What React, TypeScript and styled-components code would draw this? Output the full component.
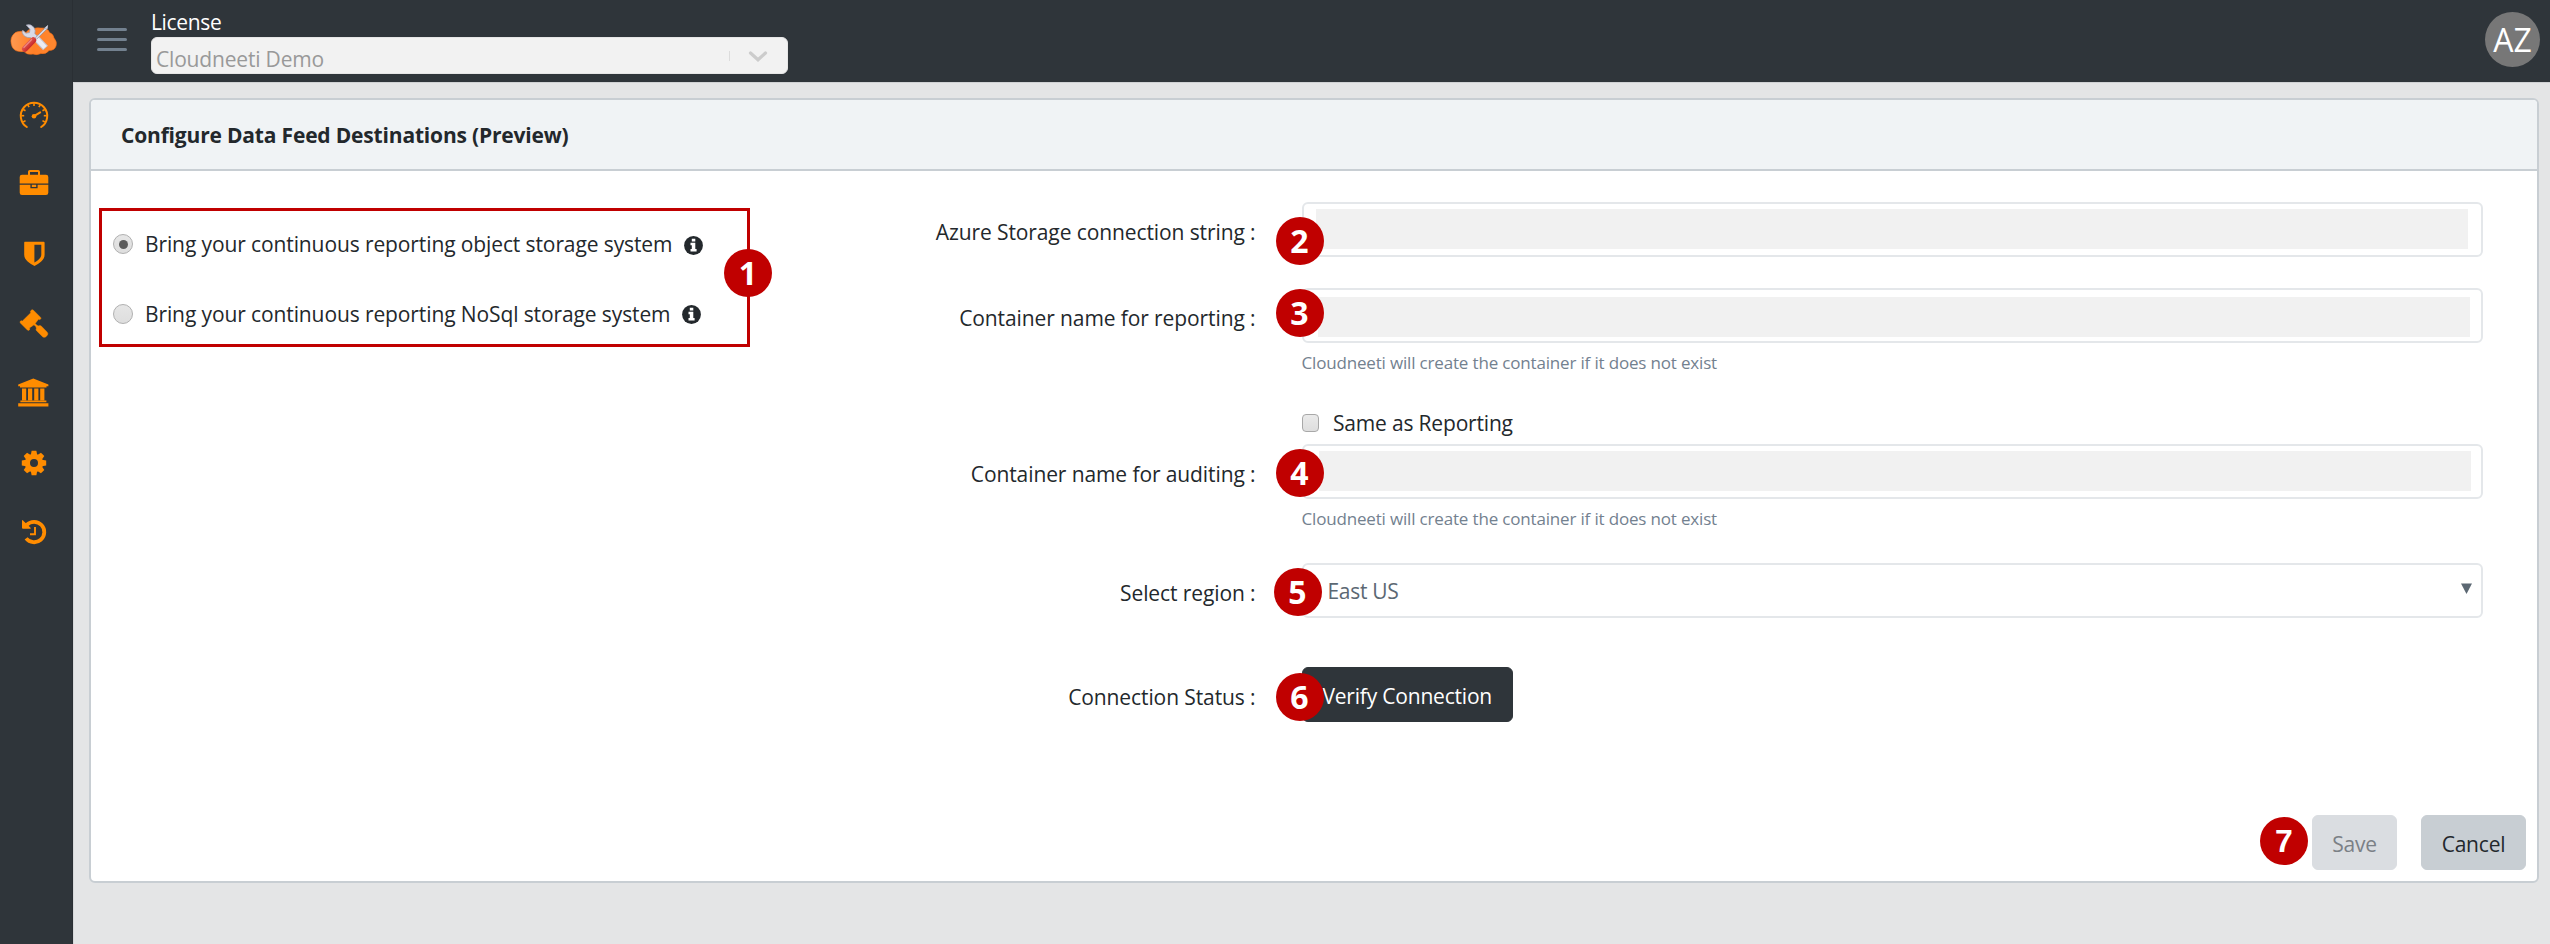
import React from "react";
import styled, { createGlobalStyle, css } from "styled-components";

const GlobalStyle = createGlobalStyle`
  *, *::before, *::after { box-sizing: border-box; }
  body {
    margin: 0;
    background: #e4e5e6;
    color: #23282c;
    font-family: "Open Sans", "Noto Sans", sans-serif;
    font-size: 21px;
    line-height: 30px;
    letter-spacing: -0.18px;
  }
`;

const Shell = styled.div`
  display: grid;
  grid-template-columns: 73px 1fr;
  grid-template-rows: 82px 1fr;
  width: 2550px;
  height: 944px;
  overflow: hidden;
`;

const Sidebar = styled.aside`
  grid-row: 1 / 3;
  background: #2f353a;
  border-right: 1px solid #2a2f34;
`;

const Brand = styled.div`
  height: 80px;
  padding: 20px 0 0 9px;
  svg { display: block; }
`;

const NavItem = styled.a`
  display: flex;
  align-items: center;
  height: 69.6px;
  padding-left: 16px;
`;

const Header = styled.header`
  display: flex;
  align-items: flex-start;
  background: #2f353a;
  padding: 0 10px 0 24px;
`;

const MenuToggle = styled.button`
  display: flex;
  flex-direction: column;
  gap: 7px;
  width: 30px;
  margin: 28px 24px 0 0;
  padding: 0;
  border: 0;
  background: none;
  span {
    height: 3px;
    border-radius: 2px;
    background: #73818f;
  }
`;

const License = styled.div`
  flex: 1;
  padding-top: 7px;
`;

const LicenseLabel = styled.div`
  color: #fff;
  letter-spacing: -0.35px;
`;

const LicenseSelect = styled.div`
  display: flex;
  align-items: center;
  width: 637px;
  height: 37px;
  padding: 4px 19px 0 4px;
  border: 1px solid #e6e6e6;
  border-radius: 6px;
  background: #f2f2f2;
  color: #999;
`;

const SelectValue = styled.span`
  flex: 1;
  padding-top: 2px;
`;

const Separator = styled.i`
  width: 1px;
  height: 10px;
  margin: 0 18px 4px 0;
  background: #dcdcdc;
`;

const Chevron = styled.svg`
  display: block;
  margin-bottom: 1px;
`;

const Avatar = styled.div`
  width: 55px;
  height: 55px;
  margin: 12px 0 0;
  border-radius: 50%;
  background: #777;
  color: #fff;
  font-size: 32px;
  line-height: 55px;
  letter-spacing: 0;
  text-align: center;
`;

const Content = styled.main`
  border-left: 1px solid #d6d8da;
  border-top: 1px solid #d0d2d4;
  padding: 15px 11px 61px 15px;
`;

const Card = styled.section`
  display: flex;
  flex-direction: column;
  height: 785px;
  border: 2px solid #c8ced3;
  border-radius: 6px;
  background: #fff;
`;

const CardHeader = styled.h1`
  margin: 0;
  height: 71px;
  padding: 20px 30px;
  border-bottom: 2px solid #c8ced3;
  border-radius: 4px 4px 0 0;
  background: #f0f3f5;
  font-size: 21px;
  font-weight: 700;
`;

const CardBody = styled.div`
  display: flex;
  height: 644px;
`;

const OptionsPane = styled.div`
  width: 749px;
  padding: 37px 0 0 8px;
`;

const OptionsFrame = styled.div`
  position: relative;
  width: 651px;
  height: 139px;
  padding: 18px 0 0 11px;
  border: 3px solid #c00000;
`;

const Option = styled.label`
  display: flex;
  align-items: center;
  height: 30px;
  margin-bottom: 39.5px;
  letter-spacing: -0.11px;
`;

const Radio = styled.span<{ $checked?: boolean }>`
  display: grid;
  place-items: center;
  width: 20px;
  height: 20px;
  margin-right: 12px;
  border: 1.5px solid #b0b0b0;
  border-radius: 50%;
  background: linear-gradient(#e6e6e6, #dedede);
  ${(p) =>
    p.$checked &&
    css`
      &::after {
        content: "";
        width: 9px;
        height: 9px;
        border-radius: 50%;
        background: #5c5c5c;
      }
    `}
`;

const InfoSvg = styled.svg`
  margin: 2px 0 0 12px;
`;

const Form = styled.form`
  flex: 1;
  display: flex;
  flex-direction: column;
  padding-top: 31px;
`;

const Row = styled.div<{ $h: number }>`
  display: grid;
  grid-template-columns: 415.5px 1181px;
  column-gap: 46px;
  height: ${(p) => p.$h}px;
`;

const Label = styled.label`
  padding-top: 15px;
  letter-spacing: -0.1px;
  text-align: right;
`;

const Field = styled.div`
  position: relative;
`;

const inputFrame = css`
  height: 55px;
  border: 2px solid #e4e7ea;
  border-radius: 6px;
  background: #fff;
`;

const Input = styled.div<{ $inset: string }>`
  ${inputFrame}
  padding: ${(p) => p.$inset};
`;

const Redaction = styled.div`
  height: 40px;
  background: #f1f1f1;
`;

const Select = styled.div`
  ${inputFrame}
  display: flex;
  align-items: center;
  justify-content: space-between;
  padding: 1px 8.5px 0 24px;
  color: #5c6873;
  letter-spacing: -0.3px;
`;

const Help = styled.small`
  display: block;
  padding-top: 5px;
  color: #73818f;
  font-size: 17px;
  letter-spacing: -0.17px;
`;

const CheckRow = styled.label`
  display: flex;
  align-items: center;
  height: 30px;
  margin-bottom: 6px;
  padding-left: 461.5px;
`;

const Checkbox = styled.span`
  width: 17.5px;
  height: 17.5px;
  margin-right: 14px;
  border: 1.5px solid #a8a8a8;
  border-radius: 4px;
  background: linear-gradient(#eaeaea, #dedede);
`;

const buttonTone = {
  dark: css`background: #2f353a; border-color: #2f353a; color: #fff;`,
  disabled: css`background: #dadde1; border-color: #dadde1; color: #7b8086;`,
  secondary: css`background: #c8ced3; border-color: #c8ced3; color: #23282c;`,
};

const Button = styled.button<{ $tone: keyof typeof buttonTone; $width: number }>`
  width: ${(p) => p.$width}px;
  height: 54.5px;
  padding: 3px 0 0;
  border: 1px solid;
  border-radius: 6px;
  font: inherit;
  letter-spacing: -0.2px;
  ${(p) => buttonTone[p.$tone]}
`;

const Footer = styled.footer`
  display: flex;
  justify-content: flex-end;
  gap: 24px;
  padding-right: 11px;
`;

const SaveGroup = styled.div`
  position: relative;
`;

const Badge = styled.span<{ $x: number; $y: number; $arial?: boolean }>`
  position: absolute;
  left: ${(p) => p.$x}px;
  top: ${(p) => p.$y}px;
  width: 48px;
  height: 48px;
  border-radius: 50%;
  background: #c00000;
  color: #fff;
  font-family: ${(p) => (p.$arial ? '"Liberation Sans", sans-serif' : '"Open Sans", sans-serif')};
  font-size: 32px;
  font-weight: 700;
  line-height: ${(p) => (p.$arial ? 49 : 48)}px;
  letter-spacing: 0;
  text-align: center;
`;

const ORANGE = "#ff8c00";

const NavIcon = ({ children }: { children: React.ReactNode }) => (
  <svg width="36" height="36" viewBox="-18 -18 36 36" fill={ORANGE}>
    {children}
  </svg>
);

const Speedometer = () => (
  <NavIcon>
    <g fill="none" stroke={ORANGE} strokeLinecap="round">
      <path d="M-7.2 12A13.2 13.2 0 1 1 7.2 12" strokeWidth="2" />
      {[-120, -90, -60, -30, 0, 30, 60, 90, 120].map((a) => (
        <path key={a} d="M0 -12.5V-9.8" strokeWidth="1.6" strokeLinecap="butt" transform={`translate(0 .7) rotate(${a})`} />
      ))}
      <path d="M0 1.2L6.2 -2.6" strokeWidth="2" />
    </g>
    <circle cx="0" cy="1.3" r="2.3" />
  </NavIcon>
);

const Briefcase = () => (
  <NavIcon>
    <path
      fillRule="evenodd"
      d="M-6 -9.3V-12.2Q-6 -14 -4.2 -14H4.2Q6 -14 6 -12.2V-9.3H12Q14.3 -9.3 14.3 -7V-.6H-14.3V-7Q-14.3 -9.3 -12 -9.3ZM-4 -12V-9.3H4V-12Z"
    />
    <path
      fillRule="evenodd"
      d="M-14.3 .8H-3.6V4.2H3.6V.8H14.3V8.7Q14.3 11 12 11H-12Q-14.3 11 -14.3 8.7ZM-2.2 .8H2.2V2.9H-2.2Z"
    />
  </NavIcon>
);

const Shield = () => (
  <NavIcon>
    <path
      fillRule="evenodd"
      d="M-9.2 -12.3H9.6Q10.6 -12.3 10.6 -11.3V.8C10.6 6.2 5 9.8 .5 12C-4 9.8 -9.8 6.2 -9.8 .8V-11.3Q-9.8 -12.3 -9.2 -12.3ZM.4 -9.2V8.6C4 6.6 7.3 4 7.3 .6V-9.2Z"
    />
  </NavIcon>
);

const Gavel = () => (
  <NavIcon>
    <path
      d="M-2.4 -14Q-1.4 -14.6 -.6 -13.8L6.6 -6.6Q7.4 -5.6 6.4 -4.8Q5.4 -4 4.4 -4.8L1.2 -.4L3.2 1.6L4.8 1.9Q6 1 7.4 2.2L13.2 8.2Q14.4 9.8 13.4 11.2L11.6 12.9Q10 13.8 8.6 12.7L2.6 6.8Q1.6 5.6 2.4 4.4L2 2.8L0 .8L-4.6 3.9Q-3.8 5 -4.6 5.9Q-5.6 6.8 -6.6 6L-13.6 -1Q-14.4 -2 -13.5 -2.9Q-12.6 -3.7 -11.6 -2.9L-3.2 -11.2Q-4 -12.4 -3.2 -13.3Z"
      stroke={ORANGE}
      strokeWidth=".5"
      strokeLinejoin="round"
    />
  </NavIcon>
);

const Bank = () => (
  <NavIcon>
    <path d="M-.7 -14.6L14.4 -8.6V-6.7H12.5V-5.4H-14V-6.7H-15.8V-8.6Z" />
    <path d="M-12 -4.6H-7.8V7.4H-12ZM-6 -4.6H-1.8V7.4H-6ZM.2 -4.6H4.4V7.4H.2ZM6.2 -4.6H10.4V7.4H6.2Z" />
    <path d="M-13.6 7.6H12.4V9.3H-13.6ZM-15.8 10.2H14.4V13.4H-15.8Z" />
  </NavIcon>
);

const Gear = () => (
  <NavIcon>
    <circle r="6.6" fill="none" stroke={ORANGE} strokeWidth="5.2" />
    {[0, 45, 90, 135, 180, 225, 270, 315].map((a) => (
      <path key={a} d="M-3.2 -8L-2.4 -12.2H2.4L3.2 -8Z" transform={`rotate(${a})`} />
    ))}
  </NavIcon>
);

const History = () => (
  <NavIcon>
    <path d="M-7.9 6.4A10.2 10.2 0 1 0 -7.2 -7.1" fill="none" stroke={ORANGE} strokeWidth="3.8" strokeLinecap="butt" />
    <path d="M-12 -11.2Q-12 -12.4 -11 -11.6L-3.4 -4.2Q-2.6 -3.2 -4 -3.2H-11Q-12 -3.2 -12 -4.2Z" />
    <path d="M1 -5V2.2H-4" fill="none" stroke={ORANGE} strokeWidth="1.9" />
  </NavIcon>
);

const Logo = () => (
  <svg width="52" height="40" viewBox="9 20 52 40">
    <defs>
      <linearGradient id="cloud" x1="0" y1="0" x2="1" y2="0">
        <stop offset="0" stopColor="#ff9a52" />
        <stop offset=".5" stopColor="#ff7f27" />
        <stop offset="1" stopColor="#ff8830" />
      </linearGradient>
      <linearGradient id="grip" x1="0" y1="0" x2="1" y2="1">
        <stop offset="0" stopColor="#f0736a" />
        <stop offset="1" stopColor="#b80d12" />
      </linearGradient>
    </defs>
    <path
      d="M19 31.5Q23 30.5 26 32.5Q29 28 34 28.5Q37 27.5 40 28Q48 27.5 49.5 32.5Q53.5 34 54 38Q57.5 42 56 46Q54.5 50.5 49 50.5Q46 54.5 41 53.5Q37 55.5 33 54Q27 55 24 51.5Q15 52.5 12.2 47Q9.5 40 12.5 35.5Q15 31.5 19 31.5Z"
      fill="url(#cloud)"
      stroke="#f36c12"
      strokeWidth=".6"
    />
    <path d="M35 37L45.5 48" stroke="#c3c5d3" strokeWidth="6.8" />
    <path d="M35 37L45 47.5" stroke="#ececf4" strokeWidth="4.6" />
    <path
      d="M26.2 25Q31 23.5 34 27.5Q35.8 30.5 34.8 33.5L38 37L33.5 41L30.5 37.6Q24 38 22.2 32.5Q22 31 22.8 30.2L25.8 33.2L29.5 32.6L30 29.2Z"
      fill="#d9dae6"
      stroke="#9b9db0"
      strokeWidth=".7"
    />
    <path d="M36 38.5L46 28.5" stroke="#8d90a0" strokeWidth="2.4" />
    <path d="M36 38.5L46 28.5" stroke="#e6e7ef" strokeWidth="1.1" />
    <path d="M44.6 28.2L47.6 25.6L47 29Z" fill="#dfe1ea" stroke="#b9bbc9" strokeWidth="1" />
    <path d="M25 48.8L33.2 40.2" stroke="url(#grip)" strokeWidth="6" strokeLinecap="round" />
    <path d="M24 47.4L31.6 39.6" stroke="#ee8b83" strokeWidth="1.3" strokeLinecap="round" />
  </svg>
);

const Info = () => (
  <InfoSvg width="19" height="19" viewBox="0 0 19 19">
    <circle cx="9.5" cy="9.5" r="9.4" fill="#23282c" />
    <path d="M7.8 2.8H11.3V5.4H7.8ZM6.5 6.8H11.3V13H12.6V15.4H6.5V13H7.8V9.2H6.5Z" fill="#fff" />
  </InfoSvg>
);

const NAV = [Speedometer, Briefcase, Shield, Gavel, Bank, Gear, History];
const HELP = "Cloudneeti will create the container if it does not exist";

export default function App() {
  return (
    <>
      <GlobalStyle />
      <Shell>
        <Sidebar>
          <Brand>
            <Logo />
          </Brand>
          <nav>
            {NAV.map((Icon, i) => (
              <NavItem key={i}>
                <Icon />
              </NavItem>
            ))}
          </nav>
        </Sidebar>
        <Header>
          <MenuToggle type="button" aria-label="Toggle menu">
            <span />
            <span />
            <span />
          </MenuToggle>
          <License>
            <LicenseLabel>License</LicenseLabel>
            <LicenseSelect>
              <SelectValue>Cloudneeti Demo</SelectValue>
              <Separator />
              <Chevron width="20" height="12" viewBox="0 0 20 12">
                <path d="M2.5 2L10 8.8L17.5 2" fill="none" stroke="#ccc" strokeWidth="3.2" strokeLinecap="round" />
              </Chevron>
            </LicenseSelect>
          </License>
          <Avatar>AZ</Avatar>
        </Header>
        <Content>
          <Card>
            <CardHeader>Configure Data Feed Destinations (Preview)</CardHeader>
            <CardBody>
              <OptionsPane>
                <OptionsFrame>
                  <Option>
                    <Radio $checked />
                    Bring your continuous reporting object storage system
                    <Info />
                  </Option>
                  <Option>
                    <Radio />
                    Bring your continuous reporting NoSql storage system
                    <Info />
                  </Option>
                  <Badge $x={622} $y={38}>1</Badge>
                </OptionsFrame>
              </OptionsPane>
              <Form>
                <Row $h={86}>
                  <Label>Azure Storage connection string :</Label>
                  <Field>
                    <Input $inset="5px 13px 0 12px">
                      <Redaction />
                    </Input>
                    <Badge $x={-26} $y={15}>2</Badge>
                  </Field>
                </Row>
                <Row $h={120}>
                  <Label>Container name for reporting :</Label>
                  <Field>
                    <Input $inset="7px 11px 0 14px">
                      <Redaction />
                    </Input>
                    <Badge $x={-26} $y={1}>3</Badge>
                    <Help>{HELP}</Help>
                  </Field>
                </Row>
                <CheckRow>
                  <Checkbox />
                  Same as Reporting
                </CheckRow>
                <Row $h={118.5}>
                  <Label>Container name for auditing :</Label>
                  <Field>
                    <Input $inset="5px 10px 0 15px">
                      <Redaction />
                    </Input>
                    <Badge $x={-26} $y={5}>4</Badge>
                    <Help>{HELP}</Help>
                  </Field>
                </Row>
                <Row $h={104.5}>
                  <Label>Select region :</Label>
                  <Field>
                    <Select>
                      East US
                      <svg width="11" height="17" viewBox="0 0 11 17">
                        <path d="M0 1.5H11L5.5 12Z" fill="#5c6873" />
                      </svg>
                    </Select>
                    <Badge $x={-28} $y={5.5}>5</Badge>
                  </Field>
                </Row>
                <Row $h={54.5}>
                  <Label>Connection Status :</Label>
                  <Field>
                    <Button type="button" $tone="dark" $width={211.5}>Verify Connection</Button>
                    <Badge $x={-26} $y={6}>6</Badge>
                  </Field>
                </Row>
              </Form>
            </CardBody>
            <Footer>
              <SaveGroup>
                <Button type="button" $tone="disabled" $width={85}>Save</Button>
                <Badge $x={-52} $y={2} $arial>7</Badge>
              </SaveGroup>
              <Button type="button" $tone="secondary" $width={105}>Cancel</Button>
            </Footer>
          </Card>
        </Content>
      </Shell>
    </>
  );
}
